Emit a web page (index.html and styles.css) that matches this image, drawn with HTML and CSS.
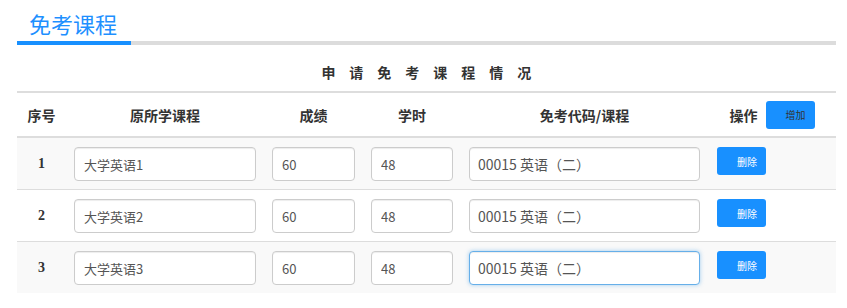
FILE: index.html
```html
<!DOCTYPE html>
<html lang="zh">
<head>
<meta charset="utf-8">
<title>免考课程</title>
<link rel="stylesheet" href="styles.css">
</head>
<body>
<div class="page">
  <div class="title-bar">
    <h2 class="title">免考课程</h2>
  </div>
  <div class="caption">申 请 免 考 课 程 情 况</div>
  <table class="grid">
    <colgroup>
      <col class="c-no"><col class="c-course"><col class="c-score"><col class="c-hours"><col class="c-code"><col class="c-op">
    </colgroup>
    <thead>
      <tr>
        <th><div class="th-in">序号</div></th>
        <th><div class="th-in">原所学课程</div></th>
        <th><div class="th-in">成绩</div></th>
        <th><div class="th-in">学时</div></th>
        <th><div class="th-in">免考代码/课程</div></th>
        <th><div class="th-in">操作<button class="btn btn-add">增加</button></div></th>
      </tr>
    </thead>
    <tbody>
      <tr class="odd">
        <td class="no">1</td>
        <td><input class="field" value="大学英语1"></td>
        <td><input class="field" value="60"></td>
        <td><input class="field" value="48"></td>
        <td><input class="field code" value="00015 英语（二）"></td>
        <td class="op"><button class="btn btn-del">删除</button></td>
      </tr>
      <tr>
        <td class="no">2</td>
        <td><input class="field" value="大学英语2"></td>
        <td><input class="field" value="60"></td>
        <td><input class="field" value="48"></td>
        <td><input class="field code" value="00015 英语（二）"></td>
        <td class="op"><button class="btn btn-del">删除</button></td>
      </tr>
      <tr class="odd">
        <td class="no">3</td>
        <td><input class="field" value="大学英语3"></td>
        <td><input class="field" value="60"></td>
        <td><input class="field" value="48"></td>
        <td><input class="field code focused" value="00015 英语（二）"></td>
        <td class="op"><button class="btn btn-del">删除</button></td>
      </tr>
    </tbody>
  </table>
</div>
</body>
</html>
```

FILE: styles.css
```css
* { box-sizing: border-box; }
html, body { margin: 0; padding: 0; background: #fff; }
body {
  font-family: "Noto Sans CJK SC", "Noto Sans", sans-serif;
  color: #333;
  font-size: 14px;
}
.page { padding: 0 11px 0 17px; }

.title-bar {
  border-bottom: 4px solid #dcdcdc;
  padding-top: 8px;
}
.title {
  display: inline-block;
  margin: 0 0 -4px 0;
  padding: 0 11px 3px 12px;
  width: 114px;
  font-size: 22px;
  line-height: 30px;
  font-weight: normal;
  color: #1e90ff;
  border-bottom: 4px solid #1890ff;
  white-space: nowrap;
}

.caption {
  text-align: center;
  padding-top: 8px;
  padding-left: 5px;
  height: 46px;
  line-height: 38px;
  font-size: 14px;
  font-weight: bold;
  letter-spacing: 5.4px;
  color: #333;
}

.grid {
  width: 819px;
  table-layout: fixed;
  border-collapse: collapse;
  border-top: 2px solid #ddd;
}
.c-no { width: 49px; }
.c-course { width: 198px; }
.c-score { width: 99px; }
.c-hours { width: 98px; }
.c-code { width: 247px; }
.c-op { width: 128px; }

.grid th {
  padding: 0 8px;
  border-bottom: 2px solid #ddd;
  font-weight: bold;
  font-size: 14px;
  color: #333;
}
.th-in {
  height: 43px;
  display: flex;
  align-items: center;
  justify-content: center;
  white-space: nowrap;
}

.grid td {
  padding: 9px 8px 8px 8px;
  border-top: 1px solid #ddd;
  vertical-align: middle;
}
.grid td.op { vertical-align: top; }
.grid tr.odd td { background: #f9f9f9; }
.grid td.no {
  text-align: center;
  font-family: "Liberation Serif", serif;
  font-weight: bold;
  font-size: 14px;
  color: #333;
}

.field {
  display: block;
  width: 100%;
  height: 34px;
  margin: 0;
  padding: 0 9px;
  border: 1px solid #ccc;
  border-radius: 4px;
  background: #fff;
  font-family: "Noto Sans CJK SC", "Noto Sans", sans-serif;
  font-size: 13px;
  color: #555;
  box-shadow: inset 0 1px 1px rgba(0,0,0,0.075);
  outline: none;
}
.field.code { font-size: 14px; padding: 0 8px; }
.field.focused {
  border-color: #66afe9;
  box-shadow: inset 0 1px 1px rgba(0,0,0,0.075), 0 0 4px rgba(102,175,233,0.6);
}

.btn {
  height: 28px;
  width: 49px;
  padding: 0 8px 0 20px;
  border: none;
  border-radius: 3px;
  background: #1890ff;
  font-family: "Noto Sans CJK SC", "Noto Sans", sans-serif;
  font-size: 10px;
  text-align: left;
  white-space: nowrap;
}
.btn-add { margin-left: 8px; color: #333; }
.btn-del { display: block; margin-left: 1px; color: #fff; }
```
